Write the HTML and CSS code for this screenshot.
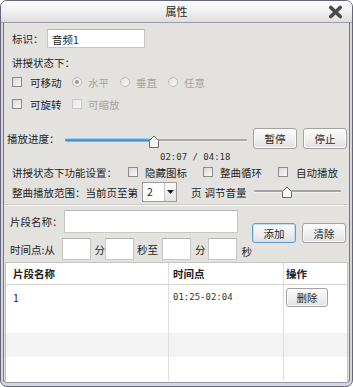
FILE: index.html
```html
<!DOCTYPE html>
<html lang="zh-CN">
<head>
    <meta charset="UTF-8">
    <title>属性</title>
    <link rel="stylesheet" href="styles.css">
</head>
<body>
    <div class="window">
        <div class="titlebar">
            <span></span>
            <span class="title">属性</span>
            <span class="close">
                <svg width="15" height="14" viewBox="0 0 15 14"><path d="M2.8 2.5 L12.2 11.5 M12.2 2.5 L2.8 11.5" stroke="#4a4a4a" stroke-width="3.6" stroke-linecap="round"/></svg>
            </span>
        </div>
        <div class="panel">
            <div class="row row-id">
                <span class="lbl-id">标识：</span>
                <div class="input input-id">音频1</div>
            </div>
            <div class="row row-heading">讲授状态下：</div>
            <div class="row row-opts first">
                <span class="opt w60"><i class="check"></i>可移动</span>
                <span class="opt w48 off"><i class="radio on"></i>水平</span>
                <span class="opt w48 off"><i class="radio"></i>垂直</span>
                <span class="opt off"><i class="radio"></i>任意</span>
            </div>
            <div class="row row-opts second">
                <span class="opt w60"><i class="check"></i>可旋转</span>
                <span class="opt off"><i class="check"></i>可缩放</span>
            </div>

            <div class="row row-play">
                <span class="lbl-play">播放进度：</span>
                <svg class="progress" width="182" height="16" viewBox="0 0 182 16">
                    <defs>
                        <linearGradient id="fill" x1="0" y1="0" x2="0" y2="1">
                            <stop offset="0" stop-color="#6fb2ec"/>
                            <stop offset="1" stop-color="#2a78c8"/>
                        </linearGradient>
                    </defs>
                    <rect x="0" y="7" width="182" height="2" rx="1" fill="#a9a9a9"/>
                    <rect x="0" y="9" width="182" height="1" fill="#ececec"/>
                    <rect x="0" y="6.5" width="90" height="3" rx="1.5" fill="url(#fill)"/>
                    <polygon points="84.5,15.5 84.5,8.5 89,4 93.5,8.5 93.5,15.5" fill="#fbfbfb" stroke="#6c6c6c"/>
                </svg>
                <div class="btns">
                    <button class="btn">暂停</button>
                    <button class="btn">停止</button>
                </div>
            </div>
            <div class="time">02:07 / 04:18</div>

            <div class="row row-func">
                <span class="lbl-func">讲授状态下功能设置：</span>
                <span class="opt w75"><i class="check"></i>隐藏图标</span>
                <span class="opt w75"><i class="check"></i>整曲循环</span>
                <span class="opt"><i class="check"></i>自动播放</span>
            </div>
            <div class="row row-range">
                <span>整曲播放范围：当前页至第</span>
                <div class="select">
                    <span class="select-val">2</span>
                    <span class="select-arrow">
                        <svg width="7" height="4" viewBox="0 0 7 4"><path d="M0 0 H7 L3.5 4 Z" fill="#222"/></svg>
                    </span>
                </div>
                <span class="page">页</span>
                <span class="vol-lbl">调节音量</span>
                <svg class="volume" width="87" height="16" viewBox="0 0 87 16">
                    <rect x="0" y="7" width="87" height="2" rx="1" fill="#a3a3a3"/>
                    <rect x="0" y="9" width="87" height="1" fill="#f0f0f0"/>
                    <polygon points="28.5,14.5 28.5,8.5 33,4 37.5,8.5 37.5,14.5" fill="#fbfbfb" stroke="#6c6c6c"/>
                </svg>
            </div>

            <div class="separator"></div>

            <div class="form">
                <div class="form-fields">
                    <div class="row row-name">
                        <span class="lbl-name">片段名称：</span>
                        <div class="input input-name"></div>
                    </div>
                    <div class="row row-point">
                        <span class="lbl-point">时间点:从</span>
                        <div class="input input-t"></div>
                        <span class="u1">分</span>
                        <div class="input input-t"></div>
                        <span class="u2">秒至</span>
                        <div class="input input-t t3"></div>
                        <span class="u3">分</span>
                        <div class="input input-t t4"></div>
                        <span class="u4">秒</span>
                    </div>
                </div>
                <div class="btns form-btns">
                    <button class="btn focus">添加</button>
                    <button class="btn">清除</button>
                </div>
            </div>

            <div class="grid">
                <div class="grid-row head">
                    <div class="cell c1">片段名称</div>
                    <div class="cell c2">时间点</div>
                    <div class="cell c3">操作</div>
                </div>
                <div class="grid-row">
                    <div class="cell c1">1</div>
                    <div class="cell c2 mono">01:25-02:04</div>
                    <div class="cell c3"><button class="btn small">删除</button></div>
                </div>
                <div class="grid-row">
                    <div class="cell c1"></div>
                    <div class="cell c2"></div>
                    <div class="cell c3"></div>
                </div>
                <div class="grid-row alt">
                    <div class="cell c1"></div>
                    <div class="cell c2"></div>
                    <div class="cell c3"></div>
                </div>
                <div class="grid-row last">
                    <div class="cell c1"></div>
                    <div class="cell c2"></div>
                    <div class="cell c3"></div>
                </div>
            </div>
        </div>
    </div>
</body>
</html>
```

FILE: styles.css
```css
* {
    box-sizing: border-box;
}
body {
    margin: 0;
    font-family: "Noto Sans CJK SC", "Noto Sans", sans-serif;
    font-size: 10.5px;
    color: #1f1f1f;
}
.window {
    width: 353px;
    height: 387px;
    border: 1px solid #67657e;
    border-radius: 7px;
    background: #d6d6da;
    display: flex;
    flex-direction: column;
    overflow: hidden;
}
.titlebar {
    height: 22px;
    flex: none;
    display: grid;
    grid-template-columns: 1fr auto 1fr;
    align-items: center;
    background: linear-gradient(#fefefe, #f0f0f0 50%, #dedede);
    border-bottom: 1px solid #9c9ba6;
}
.title {
    font-size: 11px;
    line-height: 21px;
}
.close {
    justify-self: end;
    margin-right: 9px;
    display: flex;
}
.panel {
    flex: 1;
    margin: 0 2px 3px;
    border-left: 1px solid #77758c;
    border-right: 1px solid #77758c;
    border-bottom: 1px solid #9a99a8;
    border-radius: 0 0 4px 4px;
    background: #e3e2df;
    padding-top: 6px;
    display: flex;
    flex-direction: column;
    overflow: hidden;
}
.row {
    display: flex;
    align-items: center;
    flex: none;
}

/* inputs */
.input {
    background: #fff;
    border: 1px solid #c6c6c6;
    border-top-color: #b4b4b4;
}
.row-id {
    height: 19px;
    padding-left: 8px;
}
.lbl-id {
    width: 35px;
}
.input-id {
    width: 98px;
    height: 19px;
    padding: 3px 0 0 4px;
    line-height: 14px;
}

.row-heading {
    height: 16px;
    margin-top: 6px;
    padding-left: 8px;
}
.row-opts {
    height: 16px;
    padding-left: 8px;
}
.row-opts.first {
    margin-top: 4px;
}
.row-opts.second {
    margin-top: 6px;
}

/* checkbox / radio */
.opt {
    display: flex;
    align-items: center;
    gap: 8px;
}
.opt.w60 { width: 60px; }
.opt.w48 { width: 48px; gap: 6px; }
.opt.w75 { width: 75px; gap: 7px; }
.opt.off {
    color: #a4a4a4;
    gap: 6px;
}
.check {
    width: 10px;
    height: 10px;
    border: 1px solid #8a8a8a;
    background: linear-gradient(135deg, #d9d9d9, #fafafa);
}
.off .check {
    border-color: #c9c9c9;
    background: linear-gradient(135deg, #e6e6e6, #f6f6f6);
}
.radio {
    width: 10px;
    height: 10px;
    border-radius: 50%;
    border: 1px solid #bdbdbd;
    background: linear-gradient(135deg, #e2e2e2, #f8f8f8);
    display: flex;
    align-items: center;
    justify-content: center;
}
.radio.on::after {
    content: "";
    width: 4px;
    height: 4px;
    border-radius: 50%;
    background: #9a9a9a;
}

/* playback */
.row-play {
    height: 21px;
    margin-top: 16px;
    padding-left: 3px;
}
.lbl-play {
    width: 58px;
}
.progress {
    margin-top: 2px;
}
.btns {
    display: flex;
    gap: 6px;
    margin-left: 6px;
}
.btn {
    width: 44px;
    height: 21px;
    padding: 0;
    border: 1px solid #a2a2a2;
    border-radius: 3px;
    background: linear-gradient(#fdfdfd, #f0f0f0 50%, #e1e1e1);
    font: inherit;
    color: #1f1f1f;
    box-shadow: inset 0 0 0 1px #fafafa;
}
.btn.focus {
    border-color: #5b9fd6;
    box-shadow: inset 0 0 0 1px #bfe0f6;
}
.time {
    margin-top: 2px;
    height: 12px;
    line-height: 12px;
    padding-left: 156px;
    font-family: "DejaVu Sans Mono", monospace;
    font-size: 9px;
    color: #333;
    flex: none;
}

/* function settings */
.row-func {
    height: 16px;
    margin-top: 1px;
    padding-left: 8px;
}
.lbl-func {
    width: 116px;
}
.row-range {
    height: 20px;
    margin-top: 2px;
    padding-left: 8px;
}
.select {
    width: 35px;
    height: 20px;
    margin-left: 4px;
    display: flex;
    background: #fff;
    border: 1px solid #9c9c9c;
}
.select-val {
    flex: 1;
    padding-left: 4px;
    line-height: 18px;
}
.select-arrow {
    width: 12px;
    display: flex;
    align-items: center;
    justify-content: center;
    border-left: 1px solid #c4c4c4;
    background: linear-gradient(#fbfbfb, #e3e3e3);
}
.page {
    margin-left: 14px;
}
.vol-lbl {
    margin-left: 3px;
}
.volume {
    margin-left: 7px;
    margin-top: -2px;
}

.separator {
    flex: none;
    height: 2px;
    margin-top: 2px;
    border-top: 1px solid #cdccc8;
    border-bottom: 1px solid #f7f7f5;
}

/* fragment form */
.form {
    flex: none;
    display: flex;
    margin-top: 4px;
}
.form-fields {
    width: 248px;
    flex: none;
    display: flex;
    flex-direction: column;
    gap: 5px;
}
.row-name {
    height: 23px;
    padding-left: 6px;
}
.lbl-name {
    width: 54px;
}
.input-name {
    width: 174px;
    height: 23px;
}
.row-point {
    height: 22px;
    padding-left: 6px;
    white-space: nowrap;
}
.lbl-point {
    width: 53px;
}
.input-t {
    width: 29px;
    height: 22px;
    flex: none;
}
.u1 { margin-left: 4px; }
.u2 { margin-left: 3px; }
.t3 { margin-left: 4px; }
.u3 { margin-left: 4px; }
.t4 { margin-left: 2px; }
.u4 { margin-left: 5px; margin-top: 4px; }
.form-btns {
    margin-top: 13px;
    margin-left: 0;
    align-self: flex-start;
}
.form-btns .btn {
    height: 20px;
}

/* fragment list */
.grid {
    flex: 1;
    margin: 2px 1px 0;
    border: 1px solid #c4c4c4;
    border-bottom: 0;
    background: #fff;
}
.grid-row {
    display: grid;
    grid-template-columns: 163px 115px 1fr;
    height: 24px;
}
.grid-row.head {
    height: 22px;
    font-weight: bold;
    color: #222;
    border-bottom: 1px solid #d4d4d4;
}
.grid-row.alt {
    background: #f3f3f3;
}
.cell {
    display: flex;
    align-items: center;
    padding-left: 4px;
    border-right: 1px solid #dedede;
}
.cell.c1 {
    padding-left: 7px;
}
.cell.c3 {
    border-right: 0;
    padding-left: 2px;
}
.mono {
    font-family: "DejaVu Sans Mono", monospace;
    font-size: 9px;
    color: #333;
}
.btn.small {
    width: 42px;
    height: 19px;
}
```
